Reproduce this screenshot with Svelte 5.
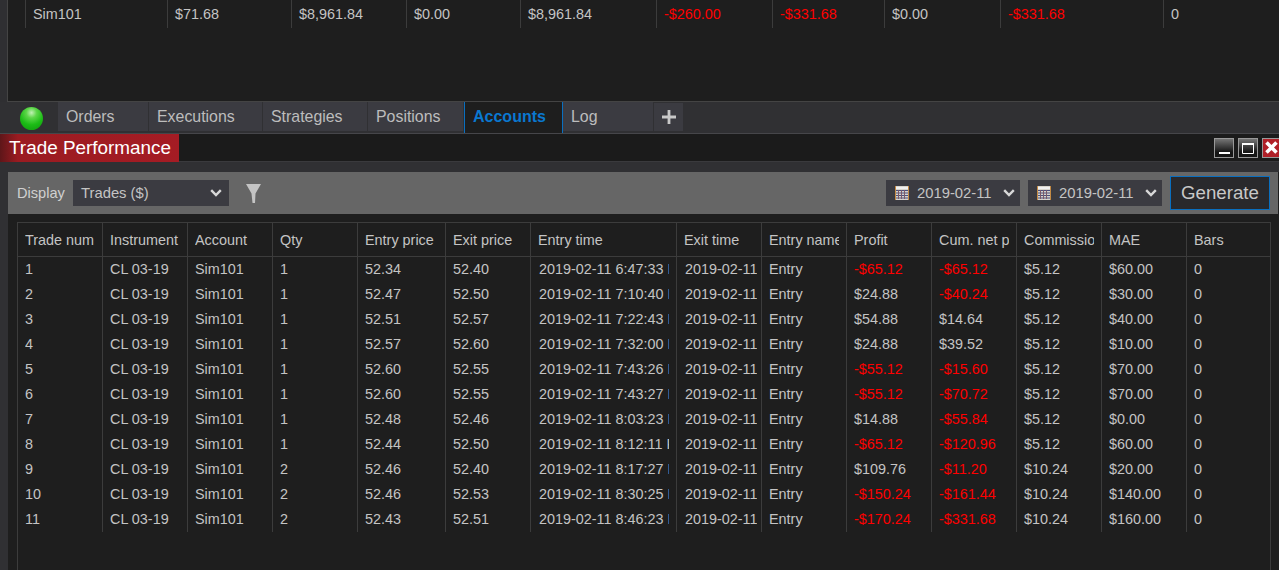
<script lang="ts">
	const tabs = ['Orders', 'Executions', 'Strategies', 'Positions', 'Accounts', 'Log'];

	const topCols = [
		{ w: 142, v: 'Sim101' },
		{ w: 124, v: '$71.68' },
		{ w: 115, v: '$8,961.84' },
		{ w: 114, v: '$0.00' },
		{ w: 136, v: '$8,961.84' },
		{ w: 116, v: '-$260.00' },
		{ w: 112, v: '-$331.68' },
		{ w: 116, v: '$0.00' },
		{ w: 163, v: '-$331.68' },
		{ w: 108, v: '0' }
	];

	const headers = [
		'Trade num', 'Instrument', 'Account', 'Qty', 'Entry price', 'Exit price', 'Entry time',
		'Exit time', 'Entry name', 'Profit', 'Cum. net profit', 'Commission', 'MAE', 'Bars'
	];

	const trades = [
		['1', 1, '52.34', '52.40', '6:47:33', '-$65.12', '-$65.12', '$5.12', '$60.00'],
		['2', 1, '52.47', '52.50', '7:10:40', '$24.88', '-$40.24', '$5.12', '$30.00'],
		['3', 1, '52.51', '52.57', '7:22:43', '$54.88', '$14.64', '$5.12', '$40.00'],
		['4', 1, '52.57', '52.60', '7:32:00', '$24.88', '$39.52', '$5.12', '$10.00'],
		['5', 1, '52.60', '52.55', '7:43:26', '-$55.12', '-$15.60', '$5.12', '$70.00'],
		['6', 1, '52.60', '52.55', '7:43:27', '-$55.12', '-$70.72', '$5.12', '$70.00'],
		['7', 1, '52.48', '52.46', '8:03:23', '$14.88', '-$55.84', '$5.12', '$0.00'],
		['8', 1, '52.44', '52.50', '8:12:11', '-$65.12', '-$120.96', '$5.12', '$60.00'],
		['9', 2, '52.46', '52.40', '8:17:27', '$109.76', '-$11.20', '$10.24', '$20.00'],
		['10', 2, '52.46', '52.53', '8:30:25', '-$150.24', '-$161.44', '$10.24', '$140.00'],
		['11', 2, '52.43', '52.51', '8:46:23', '-$170.24', '-$331.68', '$10.24', '$160.00']
	];

	const rows = trades.map((t) => [
		t[0], 'CL 03-19', 'Sim101', String(t[1]), t[2], t[3], `2019-02-11 ${t[4]} PM`,
		'2019-02-11', 'Entry', t[5], t[6], t[7], t[8], '0'
	]);

	const isLoss = (v) => String(v).startsWith('-$');
</script>

<div class="app">
	<section class="accounts-panel">
		<div class="top-row">
			{#each topCols as c}
				<div class="top-cell" class:neg={isLoss(c.v)} style="width: {c.w}px">{c.v}</div>
			{/each}
		</div>
	</section>

	<nav class="tabbar">
		<div class="status"><span class="led"></span></div>
		{#each tabs as t}
			<div class="tab tab-{t.toLowerCase()}">{t}</div>
		{/each}
		<div class="tab add">
			<svg width="14" height="14" viewBox="0 0 14 14"><path d="M5.6 0h2.8v5.6H14v2.8H8.4V14H5.6V8.4H0V5.6h5.6z" fill="#c8c8c8" /></svg>
		</div>
	</nav>

	<header class="titlebar">
		<div class="title">Trade Performance</div>
		<div class="win-buttons">
			<button class="win" aria-label="Minimize">
				<svg width="18" height="18" viewBox="0 0 18 18"><rect x="4" y="13" width="11" height="2" fill="#fff" /></svg>
			</button>
			<button class="win" aria-label="Maximize">
				<svg width="18" height="18" viewBox="0 0 18 18"><path d="M3.5 5.5h11v9h-11z" fill="none" stroke="#fff" /><rect x="3" y="4" width="12" height="2" fill="#fff" /></svg>
			</button>
			<button class="win close" aria-label="Close">
				<svg width="18" height="18" viewBox="0 0 18 18"><path d="M3.5 3.5l10 10M13.5 3.5l-10 10" stroke="#fff" stroke-width="3.6" /></svg>
			</button>
		</div>
	</header>

	<div class="body">
		<div class="content">
			<div class="toolbar">
				<span class="label">Display</span>
				<div class="select display">
					<span>Trades ($)</span>
					<svg class="chev" width="12" height="8" viewBox="0 0 12 8"><path d="M1.2 1.2L6 6l4.8-4.8" fill="none" stroke="#d8d8d8" stroke-width="2.4" /></svg>
				</div>
				<svg class="filter" width="15" height="19" viewBox="0 0 15 19"><path d="M0 0h15L9.5 9.5 9 19H6.500L5.500 9.500z" fill="#c4c4c4" /></svg>
				<div class="spacer"></div>
				{#each [0, 1] as _}
					<div class="select date">
						<svg width="14" height="14" viewBox="0 0 14 14">
							<rect width="14" height="14" fill="#d8d4cc" />
							<rect x="1" y="1" width="12" height="2" fill="#f0f0f0" />
							<path d="M1 4.5h12M1 7h12M1 9.5h12M1 12h12" stroke="#49507e" />
							<path d="M3.5 4v9M6.5 4v9M9.5 4v9" stroke="#7d5a68" />
							<path d="M.5 0v14M13.5 0v14" stroke="#c48a44" />
						</svg>
						<span>2019-02-11</span>
						<svg class="chev" width="12" height="8" viewBox="0 0 12 8"><path d="M1.2 1.2L6 6l4.8-4.8" fill="none" stroke="#d8d8d8" stroke-width="2.4" /></svg>
					</div>
				{/each}
				<button class="generate">Generate</button>
			</div>

			<div class="grid">
				<div class="row head">
					{#each headers as h}
						<div class="cell"><span>{h}</span></div>
					{/each}
				</div>
				{#each rows as r}
					<div class="row">
						{#each r as v}
							<div class="cell" class:neg={isLoss(v)}><span>{v}</span></div>
						{/each}
					</div>
				{/each}
			</div>
		</div>
	</div>
</div>

<style>
	:global(body) {
		background: #2f2f32;
		overflow: hidden;
	}

	.app {
		width: 1279px;
		height: 570px;
		overflow: hidden;
		font-family: 'Liberation Sans', Arial, sans-serif;
		font-size: 14.4px;
		color: #c4c4c4;
		display: flex;
		flex-direction: column;
	}

	.accounts-panel {
		flex: none;
		height: 102px;
		margin-left: 7px;
		background: #1e1e1e;
		border-left: 1px solid #444;
		border-bottom: 1px solid #444;
		box-sizing: border-box;
		overflow: hidden;
	}

	.top-row {
		display: flex;
		padding-left: 17px;
		height: 28px;
	}

	.top-cell {
		flex: none;
		box-sizing: border-box;
		border-left: 1px solid #3c3c3c;
		padding-left: 7px;
		line-height: 28px;
	}

	.neg {
		color: #ff0000;
	}

	.tabbar {
		flex: none;
		height: 32px;
		box-sizing: border-box;
		display: flex;
		background: #303033;
		border-bottom: 1px solid #46464a;
		padding-bottom: 2px;
		padding-left: 7px;
	}

	.status {
		width: 51px;
		padding-left: 13px;
		box-sizing: border-box;
		display: flex;
		align-items: center;
	}

	.led {
		width: 23px;
		height: 23px;
		margin-top: 4px;
		border-radius: 50%;
		background: radial-gradient(circle at 50% 25%, #c0f0b4 0, #5cd648 25%, #1cbc16 58%, #0e960c 100%);
	}

	.tab {
		flex: none;
		box-sizing: border-box;
		width: 90px;
		margin-right: 1px;
		padding-left: 8px;
		background: #3b3b41;
		font-size: 15.9px;
		line-height: 29px;
		color: #bdbdbd;
	}

	.tab-executions {
		width: 113px;
	}

	.tab-strategies {
		width: 104px;
	}

	.tab-positions {
		width: 95px;
	}

	.tab-accounts {
		width: 99px;
		margin-right: 0;
		margin-bottom: -2px;
		background: #1e1e1e;
		border-left: 1px solid #0a6fbf;
		border-right: 1px solid #0a6fbf;
		color: #0a78d0;
		font-size: 16px;
		font-weight: bold;
	}

	.add {
		width: 29px;
		padding: 0;
		margin: 1px 0 0;
		display: flex;
		align-items: center;
		justify-content: center;
	}

	.titlebar {
		height: 28px;
		flex: none;
		display: flex;
		justify-content: space-between;
		background: #1b1b1b;
		border-bottom: 1px solid #3a3a3d;
		box-sizing: border-box;
	}

	.title {
		width: 179px;
		margin-bottom: -1px;
		box-sizing: border-box;
		padding-left: 9px;
		font-size: 18.9px;
		line-height: 27px;
		color: #fff;
		background: linear-gradient(90deg, #5e1619 0, #9a1b21 10%, #a51c24 100%);
	}

	.win-buttons {
		display: flex;
		gap: 4px;
		padding-top: 4px;
		margin-right: -3px;
	}

	.win {
		width: 20px;
		height: 20px;
		padding: 0;
		border: 1px solid #999;
		background: linear-gradient(#757575, #161616 72%);
		display: flex;
		align-items: center;
		justify-content: center;
		box-sizing: border-box;
	}

	.close {
		background: #b02028;
	}

	.body {
		flex: 1;
		min-height: 0;
		padding: 10px 0 0 8px;
		background: #303033;
	}

	.content {
		height: 100%;
		background: #1e1e1e;
	}

	.toolbar {
		height: 42px;
		margin-right: 1px;
		box-sizing: border-box;
		background: #666666;
		display: flex;
		align-items: center;
		padding: 0 8px 0 9px;
	}

	.label {
		width: 56px;
		flex: none;
		font-size: 14.6px;
		color: #d0d0d0;
	}

	.select {
		height: 26px;
		background: #3b3b41;
		color: #c4c4c4;
		font-size: 14.8px;
		display: flex;
		align-items: center;
		box-sizing: border-box;
	}

	.display {
		width: 156px;
		padding-left: 8px;
		justify-content: space-between;
		padding-right: 7px;
	}

	.filter {
		margin-left: 17px;
	}

	.spacer {
		flex: 1;
	}

	.date {
		width: 134px;
		padding-left: 9px;
		margin-right: 8px;
		gap: 8px;
	}

	.date .chev {
		margin-left: auto;
		margin-right: 5px;
	}

	.generate {
		width: 100px;
		height: 34px;
		box-sizing: border-box;
		background: #29292c;
		border: 1px solid #0a6fbf;
		color: #c8c8c8;
		font-family: inherit;
		font-size: 18.7px;
		padding: 0;
	}

	.grid {
		margin: 8px 0 0 9px;
		width: 1254px;
		height: 360px;
		box-sizing: border-box;
		background: #1e1e1e;
		border: 1px solid #3c3c3c;
		border-bottom: 0;
	}

	.row {
		display: grid;
		grid-template-columns: 84px 85px 85px 85px 88px 85px 146px 85px 85px 85px 85px 85px 85px 84px;
		height: 25px;
	}

	.head {
		height: 33px;
		border-bottom: 1px solid #3c3c3c;
	}

	.cell {
		box-sizing: border-box;
		padding: 0 7px;
		border-left: 1px solid #3c3c3c;
		line-height: 25px;
		min-width: 0;
	}

	.cell:first-child {
		border-left: 0;
	}

	.cell span {
		display: block;
		overflow: hidden;
		white-space: nowrap;
	}

	.row:not(.head) .cell:nth-child(7) {
		padding-left: 8px;
	}

	.row:not(.head) .cell:nth-child(8) {
		padding: 0 4px 0 8px;
	}

	.head .cell {
		padding-top: 1px;
		line-height: 33px;
	}
</style>
